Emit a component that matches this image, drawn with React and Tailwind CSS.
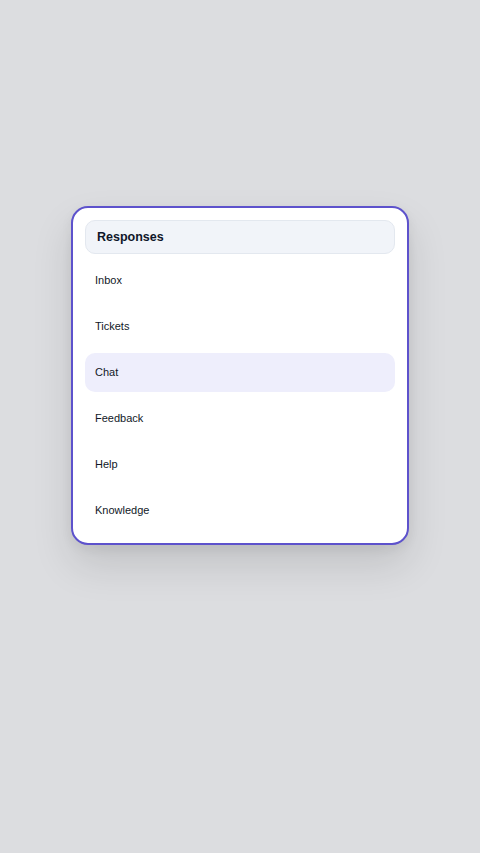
import React from "react";

const items = ["Inbox", "Tickets", "Chat", "Feedback", "Help", "Knowledge"];

export default function App() {
  return (
    <div
      className="min-h-[853px] w-full bg-[#dcdde0] flex justify-center pt-[206px]"
      style={{ fontFamily: '"Liberation Sans", Arial, sans-serif' }}
    >
      <div className="w-[338px] h-[339px] bg-white rounded-[17px] border-2 border-[#5d52cc] p-[12px] flex flex-col gap-[7px] shadow-[0_20px_40px_rgba(0,0,0,0.12),0_4px_12px_rgba(0,0,0,0.06)]">
        <div className="h-[34px] rounded-[10px] bg-[#f1f4f9] border border-[#e3e8ef] flex items-center px-[11px]">
          <span className="text-[12.5px] font-bold text-[#0f172a]">Responses</span>
        </div>
        {items.map((it) => (
          <div
            key={it}
            className={
              "h-[39px] rounded-[10px] flex items-center px-[10px] text-[11px] text-[#111827] " +
              (it === "Chat" ? "bg-[#eeeefc]" : "")
            }
          >
            {it}
          </div>
        ))}
      </div>
    </div>
  );
}
